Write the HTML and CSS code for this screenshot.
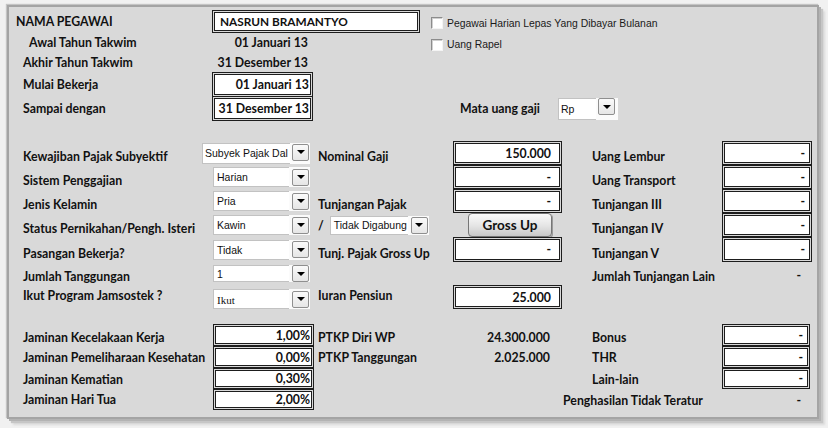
FILE: index.html
```html
<!DOCTYPE html>
<html lang="id">
<head>
<meta charset="utf-8">
<title>Data Pegawai</title>
<link rel="stylesheet" href="styles.css">
</head>
<body>
<div class="page">
  <div class="panel">
    <section class="top">
      <div class="lbl l-nama">NAMA PEGAWAI</div>
      <div class="dbox name">NASRUN BRAMANTYO</div>
      <label class="chk c1"><span class="cbox"></span>Pegawai Harian Lepas Yang Dibayar Bulanan</label>

      <div class="lbl l-awal">Awal Tahun Takwim</div>
      <div class="val">01 Januari 13</div>
      <label class="chk c2"><span class="cbox"></span>Uang Rapel</label>

      <div class="lbl">Akhir Tahun Takwim</div>
      <div class="val">31 Desember 13</div>

      <div class="lbl">Mulai Bekerja</div>
      <div class="dbox date">01 Januari 13</div>

      <div class="lbl">Sampai dengan</div>
      <div class="dbox date">31 Desember 13</div>
      <div class="mata">
        <span class="lbl">Mata uang gaji</span>
        <div class="combo rp"><span class="field">Rp</span><span class="arrow"></span></div>
      </div>
    </section>

    <section class="mid">
      <div class="lbl">Kewajiban Pajak Subyektif</div>
      <div class="cell"><div class="combo wide"><span class="field">Subyek Pajak Dal</span><span class="arrow"></span></div></div>
      <div class="mlbl">Nominal Gaji</div>
      <div class="dbox mbox">150.000</div>
      <div class="rlbl">Uang Lembur</div>
      <div class="dbox rbox">-</div>

      <div class="lbl">Sistem Penggajian</div>
      <div class="cell"><div class="combo"><span class="field">Harian</span><span class="arrow"></span></div></div>
      <div></div>
      <div class="dbox mbox">-</div>
      <div class="rlbl">Uang Transport</div>
      <div class="dbox rbox">-</div>

      <div class="lbl">Jenis Kelamin</div>
      <div class="cell"><div class="combo"><span class="field">Pria</span><span class="arrow"></span></div></div>
      <div class="mlbl">Tunjangan Pajak</div>
      <div class="dbox mbox">-</div>
      <div class="rlbl">Tunjangan III</div>
      <div class="dbox rbox">-</div>

      <div class="lbl">Status Pernikahan/Pengh. Isteri</div>
      <div class="cell"><div class="combo"><span class="field">Kawin</span><span class="arrow"></span></div></div>
      <div class="mlbl slash"><span>/</span><div class="combo gab"><span class="field">Tidak Digabung</span><span class="arrow"></span></div></div>
      <div class="cell center"><button class="btn" type="button">Gross Up</button></div>
      <div class="rlbl">Tunjangan IV</div>
      <div class="dbox rbox">-</div>

      <div class="lbl">Pasangan Bekerja?</div>
      <div class="cell"><div class="combo"><span class="field">Tidak</span><span class="arrow"></span></div></div>
      <div class="mlbl">Tunj. Pajak Gross Up</div>
      <div class="dbox mbox">-</div>
      <div class="rlbl">Tunjangan V</div>
      <div class="dbox rbox">-</div>

      <div class="lbl">Jumlah Tanggungan</div>
      <div class="cell"><div class="combo short"><span class="field">1</span><span class="arrow"></span></div></div>
      <div></div>
      <div></div>
      <div class="rlbl">Jumlah Tunjangan Lain</div>
      <div class="plain">-</div>

      <div class="lbl raise">Ikut Program Jamsostek ?</div>
      <div class="cell low"><div class="combo"><span class="field serif">Ikut</span><span class="arrow"></span></div></div>
      <div class="mlbl raise">Iuran Pensiun</div>
      <div class="dbox mbox short">25.000</div>
      <div></div>
      <div></div>
    </section>

    <section class="bot">
      <div class="lbl r1">Jaminan Kecelakaan Kerja</div>
      <div class="dbox pct">1,00%</div>
      <div class="mlbl r1">PTKP Diri WP</div>
      <div class="num r1">24.300.000</div>
      <div class="rlbl r1">Bonus</div>
      <div class="dbox rbox b">-</div>

      <div class="lbl">Jaminan Pemeliharaan Kesehatan</div>
      <div class="dbox pct">0,00%</div>
      <div class="mlbl">PTKP Tanggungan</div>
      <div class="num">2.025.000</div>
      <div class="rlbl">THR</div>
      <div class="dbox rbox b">-</div>

      <div class="lbl">Jaminan Kematian</div>
      <div class="dbox pct">0,30%</div>
      <div></div>
      <div></div>
      <div class="rlbl">Lain-lain</div>
      <div class="dbox rbox b">-</div>

      <div class="lbl r4">Jaminan Hari Tua</div>
      <div class="dbox pct">2,00%</div>
      <div></div>
      <div></div>
      <div class="rlbl wide">Penghasilan Tidak Teratur</div>
      <div class="plain">-</div>
    </section>
  </div>
</div>
</body>
</html>
```

FILE: styles.css
```css
* { box-sizing: border-box; }

html, body {
  margin: 0;
  padding: 0;
  background: #f1f1f1;
}

body {
  font-family: Lato, "Liberation Sans", sans-serif;
  color: #111;
}

.page {
  padding: 5px 0 0 7px;
  width: 828px;
  height: 428px;
}

.panel {
  width: 812px;
  height: 414px;
  background: #d9d9d9;
  border: 2px solid #a4a4a4;
  box-shadow: -1px -1px 1px #c4c4c4, 2px 2px 0 #b3b3b3, 4px 4px 1px #c6c6c6, 6px 6px 2px #dadada;
  padding: 3px 0 0 7px;
}

/* generic labels */
.lbl, .mlbl, .rlbl, .val, .num, .plain {
  font-weight: 700;
  font-size: 12.3px;
  white-space: nowrap;
  display: flex;
  align-items: center;
}

.lbl { padding-left: 7px; }

/* double border boxes */
.dbox {
  border: 3px double #1d1d1d;
  background: #fff;
  background-clip: padding-box;
  font-weight: 700;
  font-size: 12.3px;
  display: flex;
  align-items: center;
  justify-content: flex-end;
  white-space: nowrap;
}

/* ---------- top ---------- */
.top {
  display: grid;
  grid-template-columns: 196px 208px 11px 1fr;
  grid-template-rows: 23px 19px 20px 24px 25px;
}

.top > .lbl { grid-column: 1; }
.top > .val, .top > .dbox { grid-column: 2; }

.top .l-nama { padding-left: 0; }
.top .l-awal { padding-left: 13px; }

.dbox.name {
  justify-content: flex-start;
  padding-left: 5px;
  font-size: 11.8px;
}

.val {
  width: 96px;
  justify-content: flex-end;
}

.dbox.date {
  width: 101px;
  height: 25px;
  padding-right: 1px;
}

.chk {
  grid-column: 4;
  display: flex;
  align-items: center;
  gap: 4px;
  font-family: "Liberation Sans", sans-serif;
  font-size: 10.4px;
  color: #1a1a1a;
}
.chk.c1 { padding-top: 3px; }
.chk.c2 { padding-top: 4px; }

.cbox {
  width: 12px;
  height: 12px;
  background: #fff;
  border-top: 1px solid #8c8c8c;
  border-left: 1px solid #8c8c8c;
  border-right: 1px solid #f4f4f4;
  border-bottom: 1px solid #f4f4f4;
  box-shadow: inset 1px 1px 0 #d0d0d0;
}

.mata {
  grid-column: 4;
  display: flex;
  align-items: center;
  padding-left: 29px;
  gap: 18px;
}
.mata .lbl { padding-left: 0; }

/* ---------- combos ---------- */
.combo {
  display: flex;
  align-items: center;
  background: #fbfbfb;
  height: 20px;
  width: 97px;
  font-family: "Liberation Sans", sans-serif;
  font-size: 10.5px;
  font-weight: 400;
}

.combo .field {
  flex: 1;
  height: 100%;
  background: #fff;
  border: 1px solid #c2c2c2;
  border-right: none;
  padding-left: 3px;
  display: flex;
  align-items: center;
  overflow: hidden;
  white-space: nowrap;
  color: #111;
}

.combo .field.serif {
  font-family: "Liberation Serif", serif;
  font-size: 11px;
  padding-top: 2px;
}

.combo .arrow {
  width: 17px;
  height: 17px;
  margin: 0 1px 0 3px;
  border: 1px solid #8f8f8f;
  border-radius: 2px;
  background: linear-gradient(#fafafa, #e6e6e6);
  display: flex;
  align-items: center;
  justify-content: center;
}
.combo .arrow::after {
  content: "";
  width: 0;
  height: 0;
  border-left: 4px solid transparent;
  border-right: 4px solid transparent;
  border-top: 4px solid #000;
}

.combo.rp { width: 60px; height: 22px; }
.combo.rp .field { padding-left: 2px; }
.combo.rp .arrow { margin: 0 3px 4px 2px; }

.combo.wide { width: 108px; height: 21px; }
.combo.wide .field { padding-left: 2px; }
.combo.wide .arrow { margin: 0 1px 2px 2px; }
.combo.short { height: 17px; }
.combo.gab { width: 99px; height: 19px; }

/* ---------- middle ---------- */
.mid, .bot {
  display: grid;
  grid-template-columns: 186px 116px 135px 109px 160px 90px;
}

.mid {
  margin-top: 20px;
  grid-template-rows: 24px 24px 24px 24px 25px 23px 24px;
}

.mid .lbl, .mid .mlbl, .mid .rlbl {
  align-items: flex-end;
  padding-bottom: 1px;
}
.mid .raise { padding-bottom: 6px; }

.cell {
  display: flex;
  align-items: center;
}
.cell .combo:not(.wide) { margin-left: 11px; }
.cell.low { align-items: flex-end; }
.cell.center { justify-content: center; padding-left: 5px; }

.mid .mlbl.slash {
  align-items: center;
  padding-bottom: 0;
  gap: 6px;
}
.slash > span { font-weight: 700; font-size: 12.3px; }

.rlbl { padding-left: 30px; }
.rlbl.wide { padding-left: 1px; }

.mbox { padding-right: 8px; }
.mbox.short { height: 24px; align-self: end; }
.rbox { padding-right: 4px; }

.plain {
  justify-content: flex-end;
  padding-right: 11px;
}
.mid .plain { align-items: flex-end; padding-bottom: 2px; }

.btn {
  width: 84px;
  height: 24px;
  border: 1px solid #767676;
  border-radius: 4px;
  background: linear-gradient(#fbfbfb, #e4e4e4 55%, #c9c9c9);
  box-shadow: 1px 1px 0 #9a9a9a;
  font-family: Lato, "Liberation Sans", sans-serif;
  font-weight: 700;
  font-size: 13.5px;
  color: #111;
  padding: 0;
}

/* ---------- bottom ---------- */
.bot {
  margin-top: 15px;
  grid-template-rows: 22px 22px 21px 21px;
}

.pct {
  margin-left: 11px;
  width: 101px;
  padding-right: 1px;
}

.num {
  justify-content: flex-end;
  padding-right: 12px;
}

.rbox.b { width: 88px; }

.bot .lbl, .bot .mlbl, .bot .rlbl, .bot .num, .bot .plain {
  padding-top: 1px;
}
.bot .r1 { padding-top: 5px; }
.bot .r4 { padding-top: 0; padding-bottom: 1px; }
```
